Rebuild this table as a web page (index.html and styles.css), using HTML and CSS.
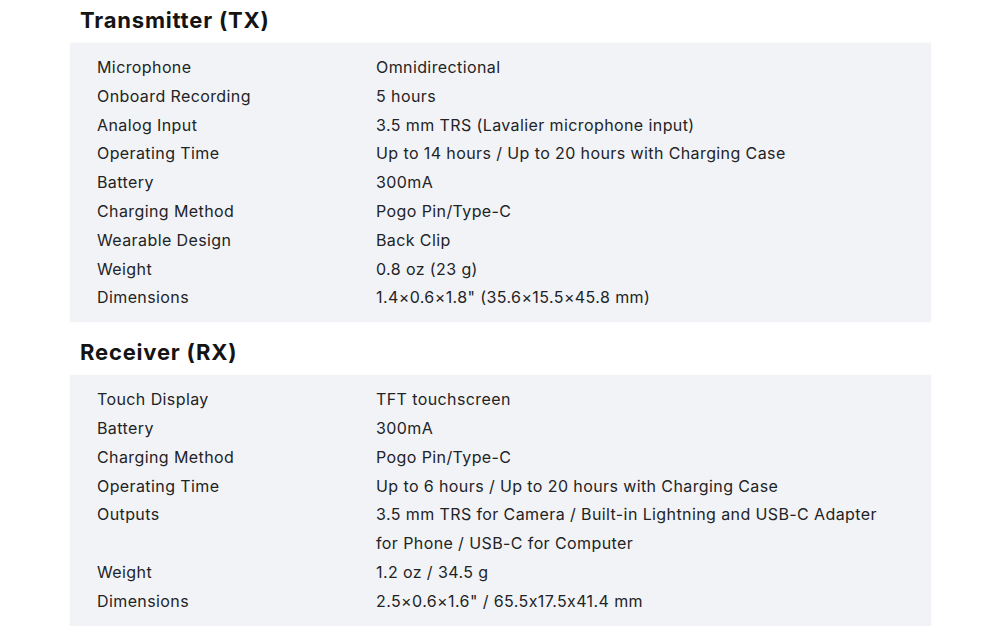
FILE: index.html
```html
<!DOCTYPE html>
<html lang="en">
<head>
<meta charset="utf-8">
<title>Specs</title>
<link rel="stylesheet" href="styles.css">
</head>
<body>
<main class="specs">
  <section class="spec-section">
    <h2 class="spec-title">Transmitter (TX)</h2>
    <dl class="spec-table">
      <dt>Microphone</dt><dd>Omnidirectional</dd>
      <dt>Onboard Recording</dt><dd>5 hours</dd>
      <dt>Analog Input</dt><dd>3.5 mm TRS (Lavalier microphone input)</dd>
      <dt>Operating Time</dt><dd>Up to 14 hours / Up to 20 hours with Charging Case</dd>
      <dt>Battery</dt><dd>300mA</dd>
      <dt>Charging Method</dt><dd>Pogo Pin/Type-C</dd>
      <dt>Wearable Design</dt><dd>Back Clip</dd>
      <dt>Weight</dt><dd>0.8 oz (23 g)</dd>
      <dt>Dimensions</dt><dd>1.4×0.6×1.8" (35.6×15.5×45.8 mm)</dd>
    </dl>
  </section>
  <section class="spec-section spec-section--next">
    <h2 class="spec-title">Receiver (RX)</h2>
    <dl class="spec-table">
      <dt>Touch Display</dt><dd>TFT touchscreen</dd>
      <dt>Battery</dt><dd>300mA</dd>
      <dt>Charging Method</dt><dd>Pogo Pin/Type-C</dd>
      <dt>Operating Time</dt><dd>Up to 6 hours / Up to 20 hours with Charging Case</dd>
      <dt>Outputs</dt><dd>3.5 mm TRS for Camera / Built-in Lightning and USB-C Adapter for Phone / USB-C for Computer</dd>
      <dt>Weight</dt><dd>1.2 oz / 34.5 g</dd>
      <dt>Dimensions</dt><dd>2.5×0.6×1.6" / 65.5x17.5x41.4 mm</dd>
    </dl>
  </section>
</main>
</body>
</html>
```

FILE: styles.css
```css
html, body {
  margin: 0;
  padding: 0;
  background: #ffffff;
}

body {
  font-family: Inter, "Noto Sans", "Liberation Sans", sans-serif;
  color: #222326;
  font-feature-settings: "calt" 0;
}

.specs {
  padding: 5px 0 0 70px;
  width: 861px;
}

.spec-section--next {
  margin-top: 15px;
}

.spec-title {
  margin: 0 0 8px 10px;
  font-size: 22px;
  line-height: 30px;
  font-weight: 700;
  letter-spacing: 0.8px;
  color: #141414;
}

.spec-table {
  margin: 0;
  padding: 10px 40px 10px 27px;
  background: #f2f3f6;
  box-shadow: 0 0 3px rgba(0, 0, 0, 0.04);
  display: grid;
  grid-template-columns: 279px 1fr;
  font-size: 16px;
  line-height: 28.8px;
  letter-spacing: 0.4px;
}

.spec-table dt,
.spec-table dd {
  margin: 0;
}
```
